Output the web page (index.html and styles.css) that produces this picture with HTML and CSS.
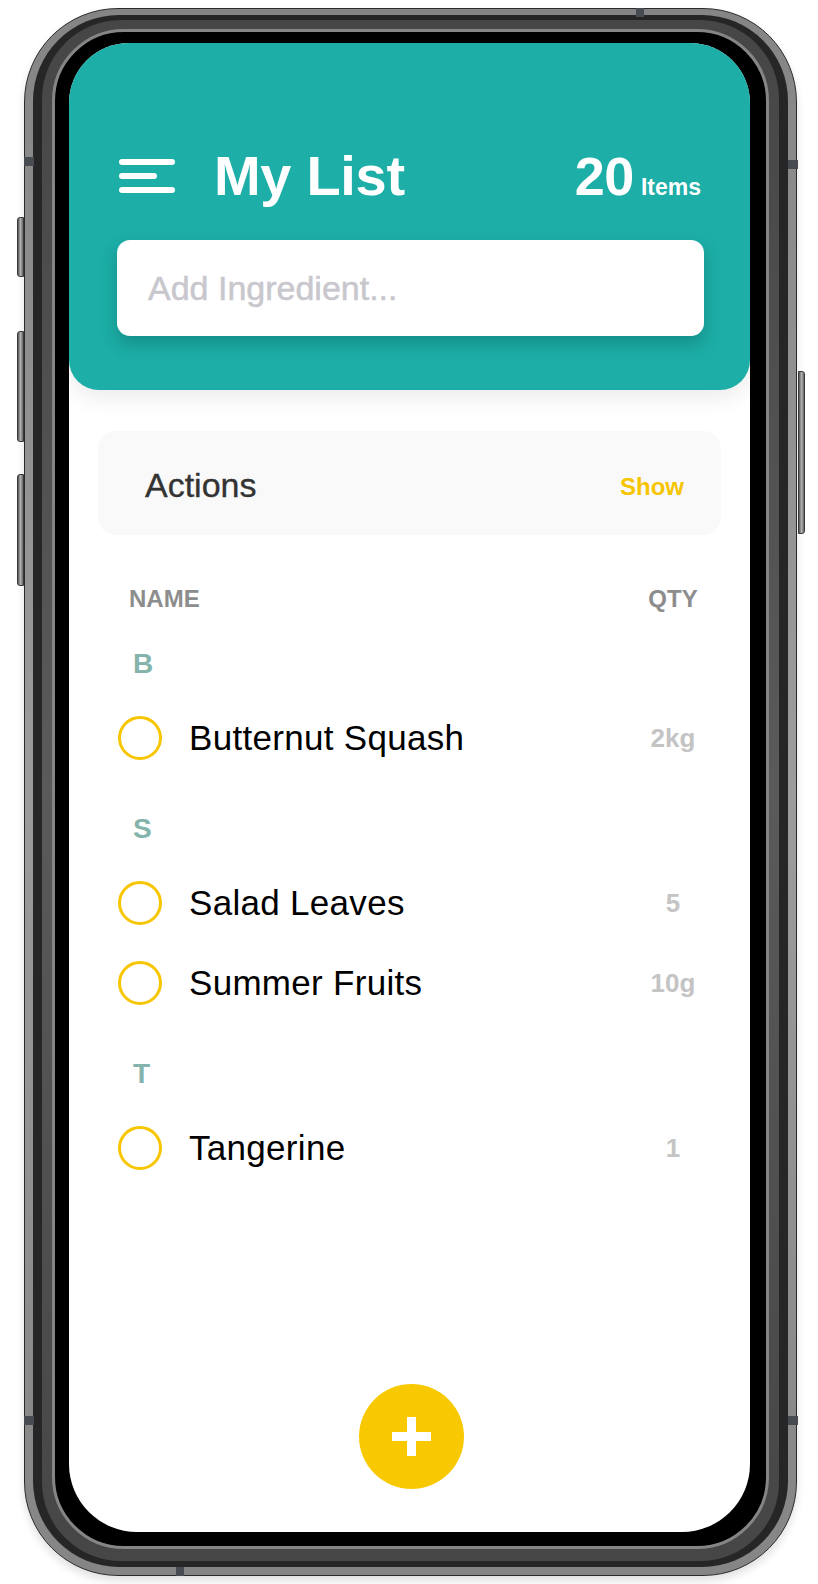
FILE: index.html
```html
<!DOCTYPE html>
<html lang="en">
<head>
<meta charset="utf-8">
<title>My List</title>
<link rel="stylesheet" href="styles.css">
</head>
<body>
<div class="stage">
  <div class="phone">
    <span class="hw-btn hw-silent"></span>
    <span class="hw-btn hw-vol-up"></span>
    <span class="hw-btn hw-vol-down"></span>
    <span class="hw-btn hw-power"></span>
    <span class="band band-left-top"></span>
    <span class="band band-right-top"></span>
    <span class="band band-top"></span>
    <span class="band band-left-bottom"></span>
    <span class="band band-right-bottom"></span>
    <span class="band band-bottom"></span>
    <div class="frame-mid">
      <div class="frame-inner">
        <div class="bezel">
          <div class="screen">
            <header class="header">
              <div class="title-row">
                <svg class="menu" width="56" height="34" viewBox="0 0 56 34" aria-hidden="true">
                  <line x1="3" y1="3" x2="53" y2="3" stroke="#fff" stroke-width="6" stroke-linecap="round"/>
                  <line x1="3" y1="17" x2="35" y2="17" stroke="#fff" stroke-width="6" stroke-linecap="round"/>
                  <line x1="3" y1="31" x2="53" y2="31" stroke="#fff" stroke-width="6" stroke-linecap="round"/>
                </svg>
                <h1 class="title">My List</h1>
                <div class="count"><span class="count-num">20</span><span class="count-label">Items</span></div>
              </div>
              <div class="add-input">Add Ingredient...</div>
            </header>

            <section class="actions">
              <span class="actions-title">Actions</span>
              <span class="actions-toggle">Show</span>
            </section>

            <div class="list">
              <div class="list-head">
                <span class="col-name">NAME</span>
                <span class="col-qty">QTY</span>
              </div>

              <div class="group">
                <div class="letter">B</div>
                <div class="item">
                  <span class="check"></span>
                  <span class="item-name">Butternut Squash</span>
                  <span class="item-qty">2kg</span>
                </div>
              </div>

              <div class="group">
                <div class="letter">S</div>
                <div class="item">
                  <span class="check"></span>
                  <span class="item-name">Salad Leaves</span>
                  <span class="item-qty">5</span>
                </div>
                <div class="item">
                  <span class="check"></span>
                  <span class="item-name">Summer Fruits</span>
                  <span class="item-qty">10g</span>
                </div>
              </div>

              <div class="group">
                <div class="letter">T</div>
                <div class="item">
                  <span class="check"></span>
                  <span class="item-name">Tangerine</span>
                  <span class="item-qty">1</span>
                </div>
              </div>
            </div>

            <button class="fab" aria-label="Add">
              <svg width="39" height="39" viewBox="0 0 39 39" aria-hidden="true">
                <rect x="15" y="0" width="9" height="39" fill="#fff"/>
                <rect x="0" y="15" width="39" height="9" fill="#fff"/>
              </svg>
            </button>
          </div>
        </div>
      </div>
    </div>
  </div>
</div>
</body>
</html>
```

FILE: styles.css
```css
* { box-sizing: border-box; }

html, body {
  margin: 0;
  padding: 0;
  background: #ffffff;
}

body {
  width: 818px;
  height: 1584px;
  overflow: hidden;
  font-family: "Liberation Sans", Arial, Helvetica, sans-serif;
}

.stage {
  padding: 8px 0 0 24px;
}

/* ---------- device frame ---------- */
.phone {
  position: relative;
  width: 773px;
  border: 1.5px solid #2a2a2a;
  border-radius: 94px;
  padding: 6px 8px 8px;
  background: linear-gradient(180deg, #858585 0%, #9c9c9c 50%, #858585 100%);
  box-shadow: 0 5px 8px rgba(0, 0, 0, 0.12);
}

.frame-mid {
  border-radius: 86px;
  padding: 5px 9px 6px;
  background: #262626;
}

.frame-inner {
  border-radius: 79px;
  padding: 9px 10px 12px;
  background: linear-gradient(180deg, #464646 0%, #5a5a5a 50%, #464646 100%);
}

.bezel {
  border: 3px solid #858585;
  border-radius: 72px;
  padding: 11px 14px 13.5px;
  background: #000;
}

.screen {
  width: 681px;
  height: 1489px;
  border-radius: 60px 60px 68px 68px;
  overflow: hidden;
  background: #ffffff;
  display: flex;
  flex-direction: column;
}

.hw-btn {
  position: absolute;
  width: 7px;
  border: 1px solid #3a3a3a;
  background: linear-gradient(90deg, #555 0%, #b0b0b0 50%, #666 100%);
}

.hw-silent   { left: -8.5px; top: 208px; height: 60px;  border-radius: 3px 0 0 3px; }
.hw-vol-up   { left: -8.5px; top: 322px; height: 111px; border-radius: 3px 0 0 3px; }
.hw-vol-down { left: -8.5px; top: 465px; height: 112px; border-radius: 3px 0 0 3px; }
.hw-power    { right: -8.5px; top: 362px; height: 163px; border-radius: 0 3px 3px 0; }

.band {
  position: absolute;
  background: #484c52;
}

.band-left-top     { left: -1.5px;  top: 148px;  width: 10px; height: 9px; }
.band-right-top    { right: -1.5px; top: 151px;  width: 10px; height: 9px; }
.band-left-bottom  { left: -1.5px;  top: 1407px; width: 10px; height: 9px; }
.band-right-bottom { right: -1.5px; top: 1407px; width: 10px; height: 9px; }
.band-top          { left: 611px;   top: -1.5px; width: 8px;  height: 9px; }
.band-bottom       { left: 151px;   bottom: -1.5px; width: 8px; height: 9px; }

/* ---------- header ---------- */
.header {
  position: relative;
  z-index: 1;
  flex: none;
  background: #1caea7;
  border-radius: 0 0 30px 30px;
  padding: 105px 49px 54px 48px;
  box-shadow: 0 8px 22px rgba(0, 0, 0, 0.08);
}

.title-row {
  display: flex;
  align-items: center;
  height: 56px;
}

.menu {
  flex: none;
  display: block;
  margin-left: 2px;
}

.title {
  margin: 0 0 0 39px;
  font-size: 56px;
  line-height: 56px;
  font-weight: 700;
  color: #ffffff;
  letter-spacing: -0.3px;
}

.count {
  margin-left: auto;
  font-size: 54px;
  line-height: 56px;
  color: #ffffff;
  font-weight: 700;
  white-space: nowrap;
}

.count-num {
  letter-spacing: -0.5px;
}

.count-label {
  margin-left: 7px;
  font-size: 23px;
  line-height: 1;
}

.add-input {
  margin: 36px -3px 0 0;
  height: 96px;
  display: flex;
  align-items: center;
  padding-left: 31px;
  background: #ffffff;
  border-radius: 13px;
  font-size: 34px;
  color: #c8c7cd;
  -webkit-text-stroke: 0.5px #c8c7cd;
  box-shadow: 0 8px 16px rgba(0, 60, 58, 0.28);
}

/* ---------- actions card ---------- */
.actions {
  flex: none;
  margin: 41px 29px 0;
  height: 104px;
  border-radius: 18px;
  background: #f9f9f9;
  display: flex;
  align-items: center;
  justify-content: space-between;
  padding: 5px 37px 0 47px;
}

.actions-title {
  font-size: 34px;
  color: #333333;
  -webkit-text-stroke: 0.35px #333333;
}

.actions-toggle {
  font-size: 24px;
  font-weight: 700;
  color: #f6c500;
  margin-top: 3px;
}

/* ---------- list ---------- */
.list {
  flex: 1;
  padding: 0 47px 0 48px;
}

.list-head {
  margin-top: 50px;
  height: 28px;
  display: flex;
  align-items: center;
  font-size: 24px;
  line-height: 28px;
  font-weight: 700;
  color: #8d8d8d;
}

.col-name {
  margin-left: 12px;
}

.col-qty {
  margin-left: auto;
  width: 60px;
  text-align: center;
}

.group {
  margin-top: 31px;
}

.group:first-of-type {
  margin-top: 30px;
}

.letter {
  height: 40px;
  line-height: 40px;
  padding-left: 16px;
  margin-bottom: 14px;
  font-size: 28px;
  font-weight: 700;
  color: #84b4ab;
}

.item {
  height: 80px;
  display: flex;
  align-items: center;
}

.check {
  flex: none;
  width: 44px;
  height: 44px;
  margin-left: 1px;
  border: 3px solid #f7c600;
  border-radius: 50%;
}

.item-name {
  margin-left: 27px;
  font-size: 35px;
  letter-spacing: 0.3px;
  color: #000000;
}

.item-qty {
  margin-left: auto;
  width: 60px;
  text-align: center;
  font-size: 26px;
  font-weight: 700;
  color: #c4c4c4;
}

/* ---------- floating button ---------- */
.fab {
  flex: none;
  align-self: center;
  width: 105px;
  height: 105px;
  margin: 0 0 43px 4px;
  padding: 0;
  border: none;
  border-radius: 50%;
  background: #f8c900;
  display: flex;
  align-items: center;
  justify-content: center;
}

.fab svg {
  display: block;
}
```
